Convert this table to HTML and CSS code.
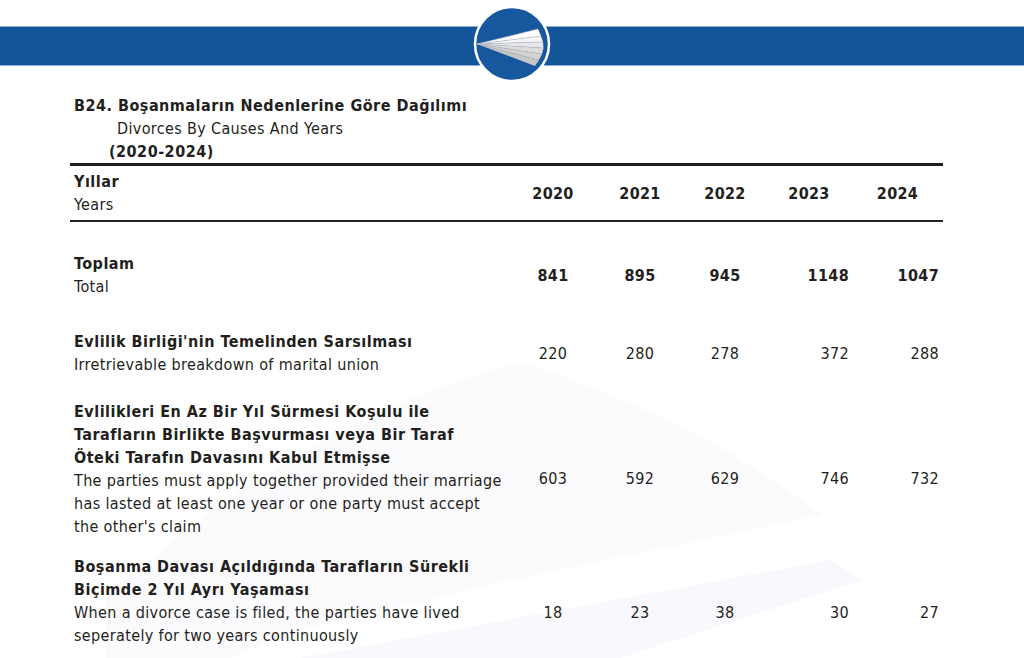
FILE: index.html
```html
<!DOCTYPE html>
<html lang="tr">
<head>
<meta charset="utf-8">
<title>B24. Boşanmaların Nedenlerine Göre Dağılımı</title>
<link rel="stylesheet" href="styles.css">
</head>
<body>
<div class="page">
  <svg class="watermark" width="1024" height="658" viewBox="0 0 1024 658" aria-hidden="true">
    <path d="M105 658 L105 600 Q300 420 520 362 Q700 420 822 515 L520 578 L300 630 L230 658 Z" fill="#fbfafd"/>
    <path d="M300 658 L830 560 L862 580 L620 658 Z" fill="#f9f8fc"/>
  </svg>

  <header class="band">
    <svg class="logo" width="80" height="80" viewBox="0 0 80 80" aria-hidden="true">
      <circle cx="40" cy="40" r="37" fill="#17579d" stroke="#ffffff" stroke-width="2.5"/>
      <path d="M5 40 L66 25 L69 32 Z" fill="#ffffff"/>
      <path d="M5 40 L69 32 L71 38 Z" fill="#f4f4f4"/>
      <path d="M5 40 L71 38 L71.5 44 Z" fill="#e8e8e8"/>
      <path d="M5 40 L71.5 44 L70 50 Z" fill="#dcdcdc"/>
      <path d="M5 40 L70 50 L67 56 Z" fill="#d2d2d2"/>
      <path d="M5 40 L67 56 L63 62 Z" fill="#c6c6c6"/>
      <path d="M5 40 L66 25 M5 40 L69 32 M5 40 L71 38 M5 40 L71.5 44 M5 40 L70 50 M5 40 L67 56" stroke="#bdbdbd" stroke-width="0.5" fill="none"/>
    </svg>
  </header>

  <main class="sheet">
    <div class="title">
      <div class="title-tr">B24. Boşanmaların Nedenlerine Göre Dağılımı</div>
      <div class="title-en">Divorces By Causes And Years</div>
      <div class="title-period">(2020-2024)</div>
    </div>

    <div class="row head">
      <div class="label"><div class="tr">Yıllar</div><div class="en">Years</div></div>
      <div class="yr">2020</div>
      <div class="yr">2021</div>
      <div class="yr">2022</div>
      <div class="yr">2023</div>
      <div class="yr">2024</div>
    </div>

    <div class="row total">
      <div class="label"><div class="tr">Toplam</div><div class="en">Total</div></div>
      <div class="v c1 strong">841</div>
      <div class="v c2 strong">895</div>
      <div class="v c3 strong">945</div>
      <div class="v c4 strong">1148</div>
      <div class="v c5 strong">1047</div>
    </div>

    <div class="row r1">
      <div class="label"><div class="tr">Evlilik Birliği'nin Temelinden Sarsılması</div><div class="en">Irretrievable breakdown of marital union</div></div>
      <div class="v c1">220</div>
      <div class="v c2">280</div>
      <div class="v c3">278</div>
      <div class="v c4">372</div>
      <div class="v c5">288</div>
    </div>

    <div class="row r2">
      <div class="label"><div class="tr">Evlilikleri En Az Bir Yıl Sürmesi Koşulu ile<br>Tarafların Birlikte Başvurması veya Bir Taraf<br>Öteki Tarafın Davasını Kabul Etmişse</div><div class="en">The parties must apply together provided their marriage<br>has lasted at least one year or one party must accept<br>the other's claim</div></div>
      <div class="v c1">603</div>
      <div class="v c2">592</div>
      <div class="v c3">629</div>
      <div class="v c4">746</div>
      <div class="v c5">732</div>
    </div>

    <div class="row r3">
      <div class="label"><div class="tr">Boşanma Davası Açıldığında Tarafların Sürekli<br>Biçimde 2 Yıl Ayrı Yaşaması</div><div class="en">When a divorce case is filed, the parties have lived<br>seperately for two years continuously</div></div>
      <div class="v c1">18</div>
      <div class="v c2">23</div>
      <div class="v c3">38</div>
      <div class="v c4">30</div>
      <div class="v c5">27</div>
    </div>
  </main>
</div>
</body>
</html>
```
FILE: styles.css
```css
html, body {
  margin: 0;
  padding: 0;
  background: #ffffff;
}

body {
  font-family: "DejaVu Sans Condensed", "DejaVu Sans", sans-serif;
  font-stretch: condensed;
  font-size: 16px;
  line-height: 23px;
  letter-spacing: 0.35px;
  color: #231f20;
}

.page {
  position: relative;
  width: 1024px;
  height: 658px;
  overflow: hidden;
}

.watermark {
  position: absolute;
  left: 0;
  top: 0;
  z-index: 0;
}

.band {
  position: relative;
  z-index: 1;
  margin-top: 26px;
  height: 38px;
  background: #14559a;
  border-top: 1px solid #8eb0d6;
  border-bottom: 1px solid #8eb0d6;
}

.logo {
  position: absolute;
  left: 472px;
  top: -23px;
}

.sheet {
  position: relative;
  z-index: 1;
  width: 873px;
  margin-left: 70px;
  padding-top: 28px;
}

.title {
  padding-left: 4px;
  border-bottom: 3px solid #231f20;
}

.title-tr {
  font-weight: bold;
  letter-spacing: 0.5px;
}

.title-en {
  padding-left: 43px;
}

.title-period {
  padding-left: 35px;
  font-weight: bold;
  letter-spacing: 0.5px;
}

.row {
  display: grid;
  grid-template-columns: 440px 86px 88px 82px 86px 91px;
}

.label {
  padding-left: 4px;
}

.tr {
  font-weight: bold;
  letter-spacing: 0.5px;
}

.head {
  padding: 4px 0 4px;
  border-bottom: 2px solid #231f20;
}

.yr {
  align-self: center;
  text-align: center;
  font-weight: bold;
}

.v {
  align-self: center;
  text-align: center;
}

.v.c4 {
  text-align: right;
  padding-right: 3px;
}

.v.c5 {
  text-align: right;
  padding-right: 4px;
}

.strong {
  font-weight: bold;
}

.total {
  padding-top: 30px;
}

.r1 {
  padding-top: 32px;
}

.r2 {
  padding-top: 24px;
}

.r2 .v {
  padding-top: 18px;
}

.r3 {
  padding-top: 17px;
}

.r3 .v {
  padding-top: 23px;
}
```
